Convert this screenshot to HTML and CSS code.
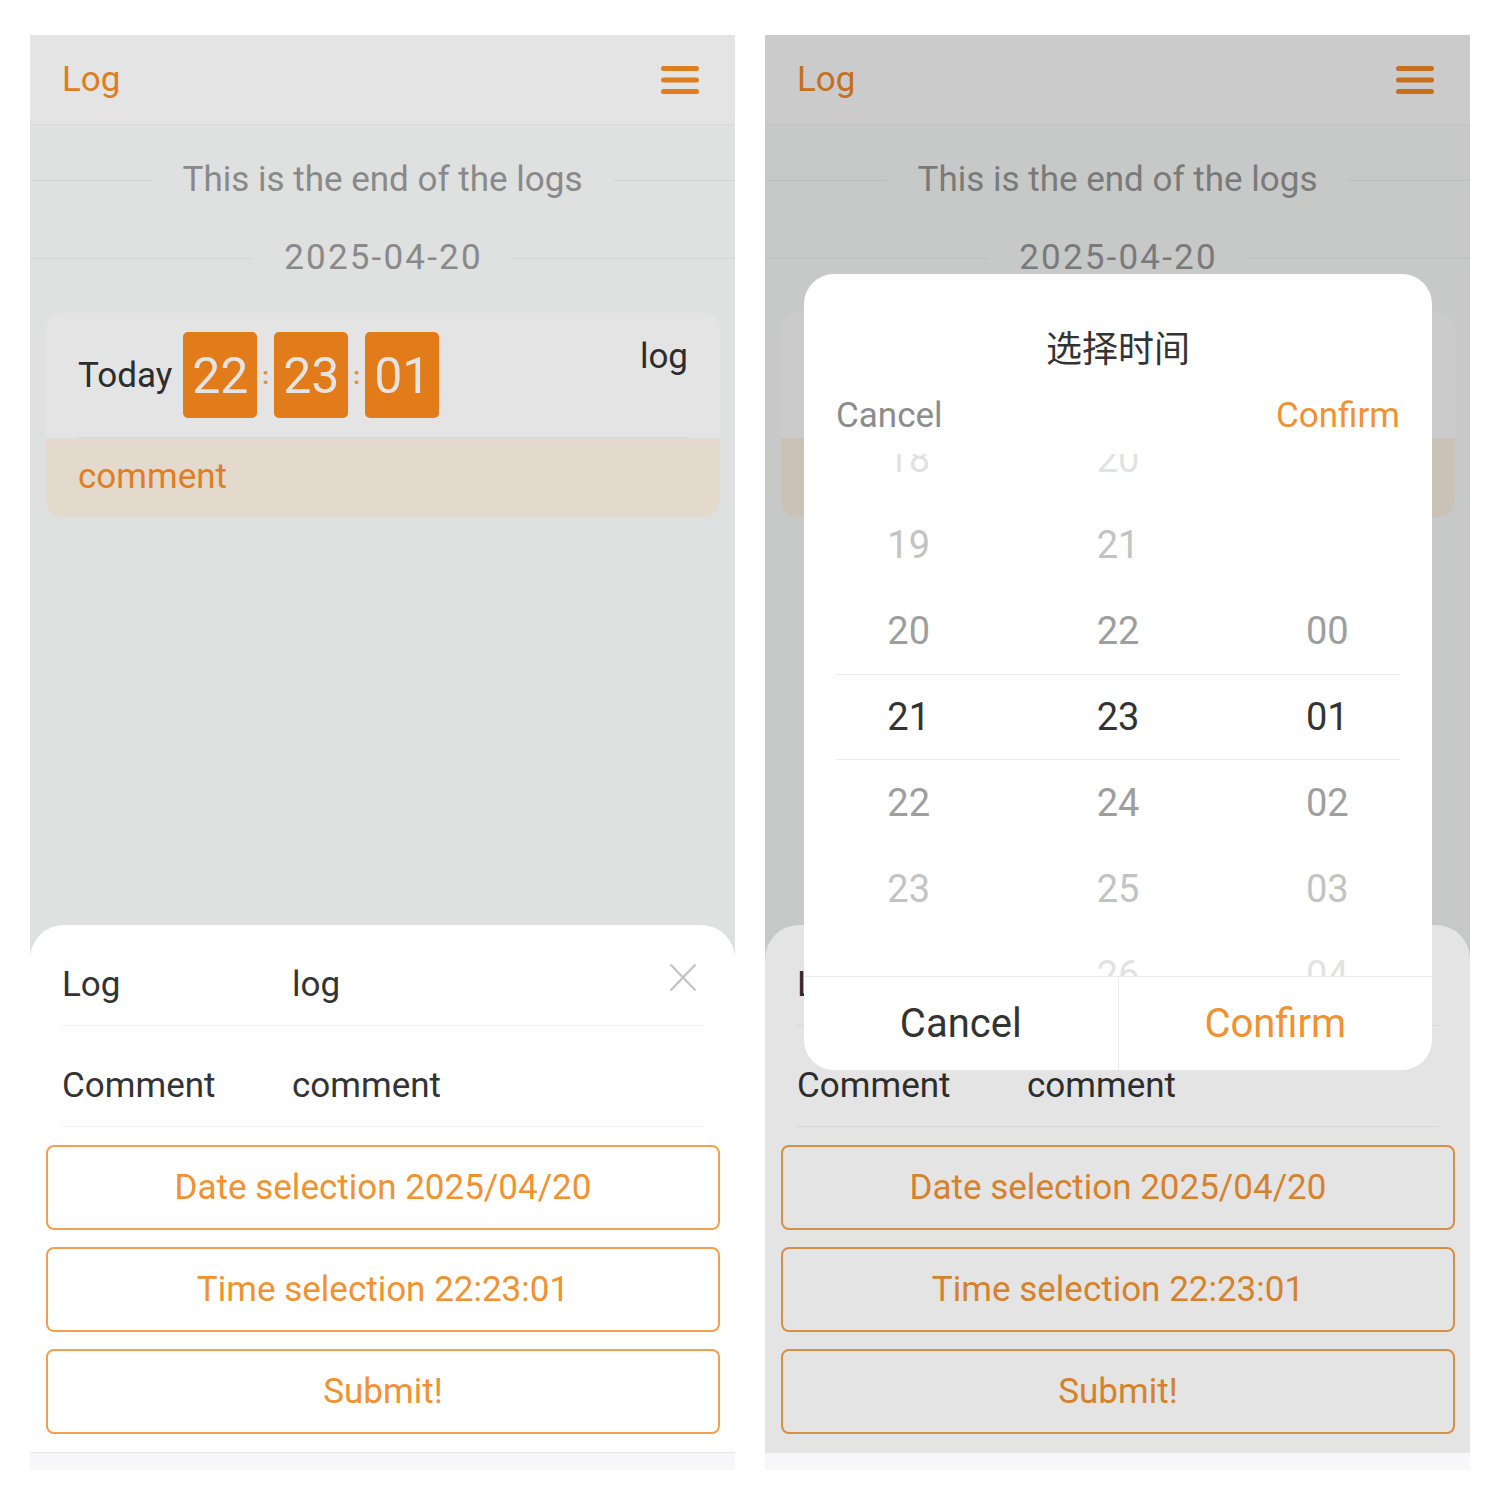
FILE: index.html
```html
<!DOCTYPE html>
<html lang="en">
<head>
<meta charset="utf-8">
<title>Log</title>
<link rel="stylesheet" href="styles.css">
</head>
<body>
<div class="stage">

  <!-- LEFT PHONE -->
  <div class="phone">
    <div class="screen">
      <div class="page">
        <div class="header">
          <span class="brand">Log</span>
          <svg class="menu" width="38" height="28" viewBox="0 0 38 28"><rect x="0" y="0" width="38" height="5" rx="2.5"/><rect x="0" y="11.5" width="38" height="5" rx="2.5"/><rect x="0" y="23" width="38" height="5" rx="2.5"/></svg>
        </div>
        <div class="divider first"><span class="line"></span><span class="divider-text">This is the end of the logs</span><span class="line"></span></div>
        <div class="divider second"><span class="line"></span><span class="divider-text date">2025-04-20</span><span class="line"></span></div>
        <div class="card">
          <div class="card-top">
            <span class="today">Today</span>
            <span class="tbox">22</span><span class="tcolon">:</span><span class="tbox">23</span><span class="tcolon">:</span><span class="tbox">01</span>
            <span class="card-log">log</span>
          </div>
          <div class="card-sep"></div>
          <div class="card-comment">comment</div>
        </div>
      </div>
      <div class="mask"></div>
      <div class="sheet">
        <svg class="close" width="28" height="29" viewBox="0 0 28 29"><path d="M1.5 1.5 L26.5 27.5 M26.5 1.5 L1.5 27.5"/></svg>
        <div class="row"><span class="row-label">Log</span><span class="row-value">log</span></div>
        <div class="row"><span class="row-label">Comment</span><span class="row-value">comment</span></div>
        <div class="btns">
          <div class="btn">Date selection 2025/04/20</div>
          <div class="btn">Time selection 22:23:01</div>
          <div class="btn">Submit!</div>
        </div>
      </div>
    </div>
    <div class="navbar"></div>
  </div>

  <!-- RIGHT PHONE -->
  <div class="phone">
    <div class="screen">
      <div class="page">
        <div class="header">
          <span class="brand">Log</span>
          <svg class="menu" width="38" height="28" viewBox="0 0 38 28"><rect x="0" y="0" width="38" height="5" rx="2.5"/><rect x="0" y="11.5" width="38" height="5" rx="2.5"/><rect x="0" y="23" width="38" height="5" rx="2.5"/></svg>
        </div>
        <div class="divider first"><span class="line"></span><span class="divider-text">This is the end of the logs</span><span class="line"></span></div>
        <div class="divider second"><span class="line"></span><span class="divider-text date">2025-04-20</span><span class="line"></span></div>
        <div class="card">
          <div class="card-top">
            <span class="today">Today</span>
            <span class="tbox">22</span><span class="tcolon">:</span><span class="tbox">23</span><span class="tcolon">:</span><span class="tbox">01</span>
            <span class="card-log">log</span>
          </div>
          <div class="card-sep"></div>
          <div class="card-comment">comment</div>
        </div>
      </div>
      <div class="mask"></div>
      <div class="sheet">
        <svg class="close" width="28" height="29" viewBox="0 0 28 29"><path d="M1.5 1.5 L26.5 27.5 M26.5 1.5 L1.5 27.5"/></svg>
        <div class="row"><span class="row-label">Log</span><span class="row-value">log</span></div>
        <div class="row"><span class="row-label">Comment</span><span class="row-value">comment</span></div>
        <div class="btns">
          <div class="btn">Date selection 2025/04/20</div>
          <div class="btn">Time selection 22:23:01</div>
          <div class="btn">Submit!</div>
        </div>
      </div>
      <div class="mask"></div>
      <div class="popup">
        <div class="popup-title">选择时间</div>
        <div class="popup-actions"><span class="act-cancel">Cancel</span><span class="act-confirm">Confirm</span></div>
        <div class="picker">
          <div class="pcol">
            <div class="pi f3">18</div>
            <div class="pi f2">19</div>
            <div class="pi f1">20</div>
            <div class="pi sel">21</div>
            <div class="pi f1">22</div>
            <div class="pi f2">23</div>
            <div class="pi f3"></div>
          </div>
          <div class="pcol">
            <div class="pi f3">20</div>
            <div class="pi f2">21</div>
            <div class="pi f1">22</div>
            <div class="pi sel">23</div>
            <div class="pi f1">24</div>
            <div class="pi f2">25</div>
            <div class="pi f3">26</div>
          </div>
          <div class="pcol">
            <div class="pi f3"></div>
            <div class="pi f2"></div>
            <div class="pi f1">00</div>
            <div class="pi sel">01</div>
            <div class="pi f1">02</div>
            <div class="pi f2">03</div>
            <div class="pi f3">04</div>
          </div>
          <div class="pick-band"></div>
        </div>
        <div class="popup-footer">
          <div class="foot-btn foot-cancel">Cancel</div>
          <div class="foot-btn foot-confirm">Confirm</div>
        </div>
      </div>
    </div>
    <div class="navbar"></div>
  </div>

</div>
</body>
</html>
```

FILE: styles.css
```css
* { box-sizing: border-box; }

html, body {
  margin: 0;
  padding: 0;
  background: #ffffff;
}

body {
  font-family: Roboto, "Liberation Sans", "Noto Sans CJK SC", sans-serif;
  color: #333333;
}

.stage {
  display: flex;
  gap: 30px;
  padding: 35px 30px 0 30px;
}

.phone {
  width: 705px;
  height: 1435px;
  display: flex;
  flex-direction: column;
}

.screen {
  position: relative;
  height: 1417px;
  overflow: hidden;
  background: #fafbfb;
}

.navbar {
  height: 18px;
  background: #f7f7fa;
  border-top: 1px solid #e7e7eb;
}

/* ---------- page ---------- */
.header {
  height: 90px;
  background: #ffffff;
  border-bottom: 1px solid #f3f3f3;
  display: flex;
  align-items: center;
  justify-content: space-between;
  padding: 0 36px 0 32px;
}

.brand {
  font-size: 35px;
  color: #f98d25;
  line-height: 41px;
}

.menu { fill: #f98d25; }

.divider {
  display: flex;
  align-items: center;
  height: 40px;
}
.divider.first { margin-top: 35px; }
.divider.second { margin-top: 38px; }

.divider .line {
  flex: 1;
  height: 1px;
  background: #efefef;
}

.divider-text {
  font-size: 35px;
  color: #9a9a9a;
  padding: 0 31px;
  line-height: 40px;
}

.divider-text.date {
  letter-spacing: 2.2px;
  padding: 0 29px 0 31px;
}

.card {
  margin: 35px 15px 0 16px;
  border-radius: 16px;
  overflow: hidden;
  background: #ffffff;
}

.card-top {
  height: 124px;
  display: flex;
  align-items: center;
  padding: 0 32px;
}

.today {
  font-size: 35px;
  color: #333333;
  margin-right: 11px;
}

.tbox {
  width: 74px;
  height: 86px;
  border-radius: 5px;
  background: #fd8a1c;
  color: #ffffff;
  font-size: 50px;
  line-height: 88px;
  text-align: center;
}

.tcolon {
  width: 17px;
  text-align: center;
  font-size: 24px;
  font-weight: 700;
  color: #f7a151;
  line-height: 86px;
  padding-top: 2px;
}

.card-log {
  margin-left: auto;
  align-self: flex-start;
  margin-top: 23px;
  font-size: 35px;
  line-height: 41px;
  color: #333333;
}

.card-sep {
  height: 1px;
  margin: 0 32px;
  background: #f0f0f4;
}

.card-comment {
  background: #fff3e6;
  height: 79px;
  padding: 18px 32px 0;
  font-size: 35px;
  line-height: 41px;
  color: #fa8f2a;
}

/* ---------- overlays ---------- */
.mask {
  position: absolute;
  inset: 0;
  background: rgba(0, 0, 0, 0.106);
}

.sheet {
  position: absolute;
  left: 0;
  right: 0;
  top: 890px;
  bottom: 0;
  background: #ffffff;
  border-radius: 34px 34px 0 0;
}

.close {
  position: absolute;
  top: 38px;
  right: 38px;
  stroke: #c4c4c4;
  stroke-width: 2.4;
  fill: none;
}

.row {
  display: flex;
  margin: 0 31px 0 32px;
  padding: 39px 0 20px;
  border-bottom: 1px solid #f0f0f0;
  font-size: 35px;
  line-height: 41px;
  color: #333333;
}

.row-label { width: 230px; }

.btns {
  display: flex;
  flex-direction: column;
  gap: 17px;
  margin: 18px 15px 0 16px;
}

.btn {
  height: 85px;
  border: 2px solid #f0a050;
  border-radius: 8px;
  display: flex;
  align-items: center;
  justify-content: center;
  font-size: 35px;
  color: #f09232;
}

/* ---------- popup ---------- */
.popup {
  position: absolute;
  top: 239px;
  left: 39px;
  width: 628px;
  height: 796px;
  background: #ffffff;
  border-radius: 30px;
  overflow: hidden;
  display: flex;
  flex-direction: column;
}

.popup-title {
  padding-top: 48px;
  height: 98px;
  line-height: 48px;
  text-align: center;
  font-family: "Noto Sans CJK SC", sans-serif;
  font-size: 36px;
  color: #333333;
}

.popup-actions {
  height: 82px;
  padding: 4px 32px 0;
  display: flex;
  align-items: center;
  justify-content: space-between;
  font-size: 35px;
}

.act-cancel { color: #8c8c8c; }
.act-confirm { color: #f09232; }

.picker {
  position: relative;
  height: 522px;
  overflow: hidden;
  display: grid;
  grid-template-columns: repeat(3, 1fr);
}

.pcol {
  margin-top: -38px;
}

.pi {
  height: 86px;
  line-height: 86px;
  text-align: center;
  font-size: 38px;
}

.pi.sel { color: #333333; }
.pi.f1 { color: #9e9e9e; }
.pi.f2 { color: #c3c3c3; }
.pi.f3 { color: #e2e2e2; }

.pick-band {
  position: absolute;
  left: 32px;
  right: 32px;
  top: 220px;
  height: 86px;
  border-top: 1px solid #ececec;
  border-bottom: 1px solid #ececec;
}

.popup-footer {
  flex: 1;
  display: flex;
  border-top: 1px solid #ececec;
}

.foot-btn {
  flex: 1;
  display: flex;
  align-items: center;
  justify-content: center;
  font-size: 40px;
}

.foot-cancel {
  color: #333333;
  border-right: 1px solid #ececec;
}

.foot-confirm { color: #f09232; }
```
